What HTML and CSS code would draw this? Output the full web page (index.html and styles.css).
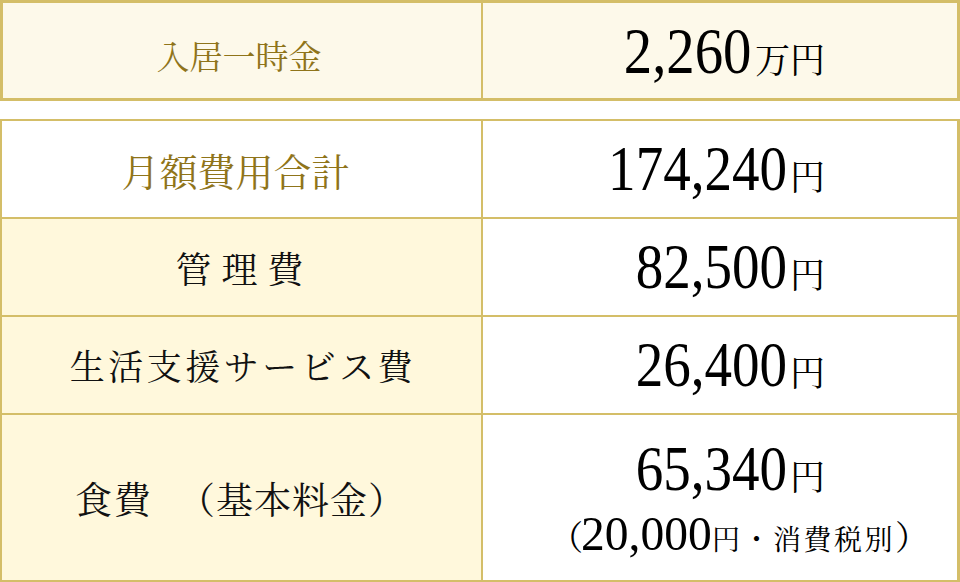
FILE: index.html
```html
<!DOCTYPE html>
<html lang="ja">
<head>
<meta charset="utf-8">
<link rel="stylesheet" href="styles.css">
</head>
<body>
<div class="page">
  <div class="table t1">
    <div class="cell label gold entry">入居一時金</div>
    <div class="cell value"><span class="amount"><span class="num big">2,260</span><span class="unit">万円</span></span></div>
  </div>
  <div class="table t2">
    <div class="cell label gold total plain">月額費用合計</div>
    <div class="cell value"><span class="amount"><span class="num">174,240</span><span class="unit">円</span></span></div>

    <div class="cell label kanri">管理費</div>
    <div class="cell value"><span class="amount"><span class="num">82,500</span><span class="unit">円</span></span></div>

    <div class="cell label service">生活支援サービス費</div>
    <div class="cell value"><span class="amount"><span class="num">26,400</span><span class="unit">円</span></span></div>

    <div class="cell label food last"><span class="food-a">食費</span><span class="food-b">（基本料金）</span></div>
    <div class="cell value stack last">
      <span class="amount"><span class="num">65,340</span><span class="unit">円</span></span>
      <span class="sub"><span class="paren">（</span><span class="subnum">20,000</span><span class="subjp">円・消費税別</span><span class="paren">）</span></span>
    </div>
  </div>
</div>
</body>
</html>
```

FILE: styles.css
```css
* { box-sizing: border-box; }
html, body { margin: 0; padding: 0; background: #ffffff; }
body {
  width: 960px;
  height: 582px;
  overflow: hidden;
  font-family: "Noto Serif CJK JP", "Noto Sans CJK JP", serif;
  color: #111111;
}
.page { display: flex; flex-direction: column; }

.table {
  display: grid;
  border-style: solid;
  border-color: #d4be68;
}
.t1 {
  grid-template-columns: 480px 474px;
  grid-template-rows: 95px;
  border-width: 3px 3px 3px 3px;
  background: #fdf9ea;
}
.t2 {
  margin-top: 18px;
  grid-template-columns: 481px 474px;
  grid-template-rows: 98px 98px 98px 165px;
  border-width: 2px 3px 2px 2px;
}
.cell {
  display: flex;
  align-items: center;
  justify-content: center;
}
.t2 .cell { border-bottom: 2px solid #d4be68; }
.t2 .cell.last { border-bottom: 0; }
.label { border-right: 2px solid #d4be68; }
.t2 .label { background: #fff8dc; }
.t2 .label.plain { background: #ffffff; }

.gold { color: #8f741a; }
.entry { font-size: 33px; padding-top: 8px; padding-right: 6px; }
.total { font-size: 38px; padding-right: 12px; }
.kanri { font-size: 36px; letter-spacing: 10px; padding-left: 6px; }
.service { font-size: 35px; letter-spacing: 3.5px; padding-left: 3px; }
.food { font-size: 37px; padding-right: 2px; }
.food-a { letter-spacing: 2px; margin-right: 25px; }
.food-b { letter-spacing: 1px; }

.value {
  justify-content: flex-end;
  padding-right: 132px;
  background: #ffffff;
}
.t1 .value { background: #fdf9ea; }
.amount { display: flex; align-items: baseline; }
.num {
  font-family: "Liberation Serif", serif;
  font-size: 64px;
  color: #000000;
  line-height: 1;
  transform: scaleX(0.86);
  transform-origin: right center;
}
.num.big { font-size: 66px; }
.unit {
  font-size: 35px;
  color: #000000;
  margin-left: 3px;
  line-height: 1;
}
.stack {
  flex-direction: column;
  align-items: flex-end;
  justify-content: center;
}
.sub {
  display: flex;
  align-items: baseline;
  margin-right: -104px;
  margin-top: 8px;
  color: #000000;
}
.paren { font-size: 34px; line-height: 1; }
.subnum {
  font-family: "Liberation Serif", serif;
  font-size: 49px;
  line-height: 1;
  transform: scaleX(0.97);
  transform-origin: right center;
  margin-left: -6px;
}
.subjp { font-size: 28px; letter-spacing: 2.5px; line-height: 1; }
```
